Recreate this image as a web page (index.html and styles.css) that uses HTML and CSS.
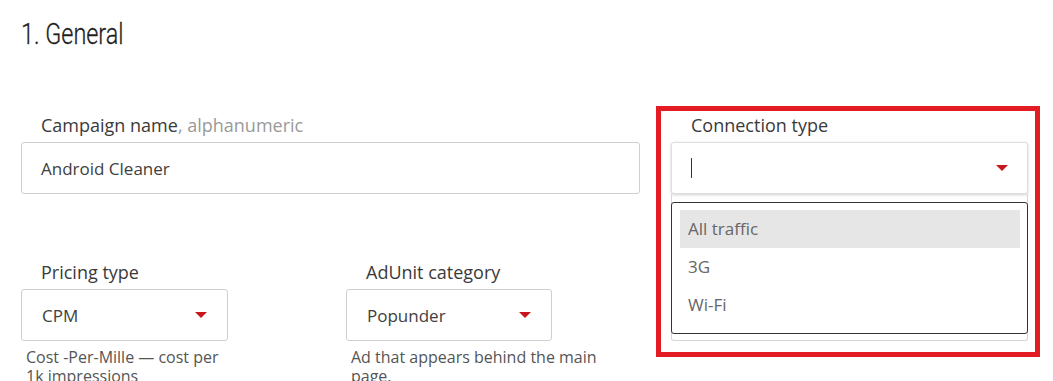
FILE: index.html
```html
<!DOCTYPE html>
<html lang="en">
<head>
<meta charset="utf-8">
<title>1. General</title>
<link rel="stylesheet" href="styles.css">
</head>
<body>
<div class="page">
  <h1 class="title"><span class="title-text">1. General</span></h1>
  <div class="form">
    <div class="left">
      <div class="field">
        <div class="label">Campaign name<span class="hint">, alphanumeric</span></div>
        <div class="input wide">Android Cleaner</div>
      </div>
      <div class="row">
        <div class="field">
          <div class="label">Pricing type</div>
          <div class="input select small">CPM<span class="caret"></span></div>
          <div class="help">Cost -Per-Mille — cost per 1k&nbsp;impressions</div>
        </div>
        <div class="field">
          <div class="label">AdUnit category</div>
          <div class="input select small">Popunder<span class="caret"></span></div>
          <div class="help">Ad that appears behind the main page.</div>
        </div>
      </div>
    </div>
    <div class="focus">
      <div class="field">
        <div class="label">Connection type</div>
        <div class="input select open"><span class="cursor"></span><span class="caret"></span></div>
      </div>
      <div class="under"></div>
      <ul class="menu">
        <li class="item active">All traffic</li>
        <li class="item">3G</li>
        <li class="item">Wi-Fi</li>
      </ul>
    </div>
  </div>
</div>
</body>
</html>
```
FILE: styles.css
```css
html, body {
  margin: 0;
  padding: 0;
  background: #fff;
}
body {
  font-family: "Open Sans", "Noto Sans", sans-serif;
  color: #3a3a3a;
  width: 1053px;
  height: 381px;
  overflow: hidden;
}
.page {
  padding: 16px 0 0 21px;
}
.title {
  margin: 0;
  font-family: Roboto, sans-serif;
  font-weight: 300;
  font-size: 30px;
  line-height: 36px;
  color: #1e1e1e;
}
.title-text {
  display: inline-block;
  transform: scaleX(0.78);
  transform-origin: 0 50%;
  -webkit-text-stroke: 0.3px #1e1e1e;
}
.form {
  display: flex;
  gap: 16px;
  margin-top: 54px;
  align-items: flex-start;
}
.left {
  width: 619px;
  padding-top: 8px;
  display: flex;
  flex-direction: column;
  gap: 67px;
}
.label {
  font-size: 18px;
  line-height: 22px;
  padding-left: 20px;
  margin-bottom: 6px;
  color: #3a3a3a;
}
.hint {
  color: #9a9a9a;
}
.input {
  box-sizing: border-box;
  height: 52px;
  border: 1px solid #cfcfcf;
  border-radius: 3px;
  padding: 0 19px;
  display: flex;
  align-items: center;
  font-size: 17px;
  color: #404040;
  background: #fff;
}
.wide {
  width: 619px;
}
.row {
  display: grid;
  grid-template-columns: 325px 294px;
}
.small {
  width: 207px;
  padding: 0 20px 0 20px;
}
.row .field:last-child .small {
  width: 206px;
}
.select {
  justify-content: space-between;
}
.caret {
  width: 0;
  height: 0;
  border-left: 6px solid transparent;
  border-right: 6px solid transparent;
  border-top: 6px solid #c8161d;
}
.help {
  width: 250px;
  margin-top: 7px;
  padding-left: 5px;
  font-size: 16px;
  line-height: 19px;
  color: #555;
}
.focus {
  position: relative;
  width: 357px;
  border: 5px solid #e31c24;
  padding: 3px 7px 11px 10px;
}
.open {
  width: 357px;
  border-color: #dedede;
  box-shadow: 0 1px 3px rgba(0, 0, 0, 0.18);
}
.cursor {
  width: 1px;
  height: 20px;
  background: #333;
}
.under {
  box-sizing: border-box;
  width: 357px;
  height: 147px;
  border: 1px solid #d6d6d6;
  border-top: none;
  border-radius: 0 0 3px 3px;
}
.menu {
  position: absolute;
  left: 10px;
  top: 91px;
  box-sizing: border-box;
  width: 357px;
  margin: 0;
  padding: 7px 7px 9px 8px;
  list-style: none;
  background: #fff;
  border: 1px solid #333;
  border-radius: 3px;
}
.item {
  height: 38px;
  line-height: 38px;
  padding-left: 8px;
  font-size: 17px;
  color: #666;
}
.active {
  background: #e6e6e6;
}
```
